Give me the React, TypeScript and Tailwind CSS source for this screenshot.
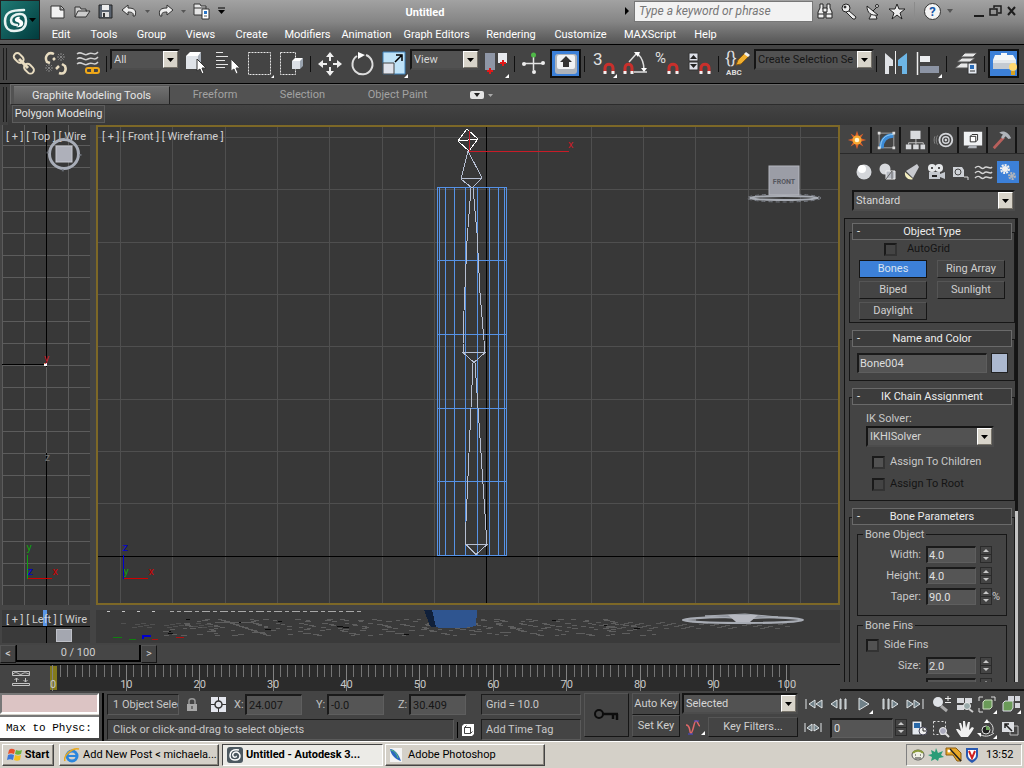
import React, { useState } from 'react';

const combo = 'appearance-none w-full h-full bg-[#525252] pl-[2px] pr-4 border-t-2 border-l-2 border-[#151515] border-b-2 border-r-2 border-b-[#4c4c4c] border-r-[#4c4c4c] outline-none';
const field = 'min-w-0 bg-[#555] border-t-2 border-l-2 border-t-[#1a1a1a] border-l-[#1a1a1a] border-b border-r border-b-[#5e5e5e] border-r-[#5e5e5e] outline-none';
const flatBtn = 'border border-t-[#555] border-l-[#555] border-b-[#161616] border-r-[#161616] text-[#cfcfcf]';
const sunken = 'border border-t-[#1c1c1c] border-l-[#1c1c1c] border-b-[#5a5a5a] border-r-[#5a5a5a]';

interface ComboProps {
  label: string;
  value: string;
  className?: string;
  dark?: boolean;
}

function Combo({ label, value, className = '', dark }: ComboProps) {
  return (
    <div className={`relative shrink-0 ${className}`}>
      <select aria-label={label} className={`${combo} ${dark ? 'text-[#161616]' : 'text-[#d6d6d6]'}`}>
        <option>{value}</option>
      </select>
      <span className="pointer-events-none absolute right-[2px] top-[2px] bottom-[2px] w-[15px] bg-[#d8d4ca] border border-t-white border-l-white border-b-[#77736a] border-r-[#77736a] flex items-center justify-center">
        <svg width="7" height="4" viewBox="0 0 7 4"><path d="M0 0h7L3.5 4z" fill="#000" /></svg>
      </span>
    </div>
  );
}

function Check({ label, disabled, className = '' }: { label: string; disabled?: boolean; className?: string }) {
  return (
    <label className={`flex items-center h-[14px] ${disabled ? 'text-[#141414]' : 'text-[#c8c8c8]'} ${className}`}>
      <input type="checkbox" disabled={disabled} className={`appearance-none w-[13px] h-[13px] border-2 border-t-[#1a1a1a] border-l-[#1a1a1a] border-b-[#333] border-r-[#333] ${disabled ? 'bg-[#444]' : 'bg-[#525252]'}`} />
      {label}
    </label>
  );
}

function Spinner({ className = '' }: { className?: string }) {
  return (
    <span className={`flex flex-col shrink-0 w-3 h-[17px] border border-[#2a2a2a] ${className}`}>
      <button aria-label="Increase" className="flex-1 flex items-center justify-center">
        <svg width="6" height="3" viewBox="0 0 6 3"><path d="M0 3h6L3 0z" fill="#c8c8c8" /></svg>
      </button>
      <button aria-label="Decrease" className="flex-1 flex items-center justify-center border-t border-[#2a2a2a]">
        <svg width="6" height="3" viewBox="0 0 6 3"><path d="M0 0h6L3 3z" fill="#c8c8c8" /></svg>
      </button>
    </span>
  );
}

/* ---------- title bar ---------- */

const quick = [
  { name: 'New', w: 'w-6', d: <path d="M2 4h10l3 3v9H2zM11 4v4h4" fill="#f2f2f2" stroke="#333" /> },
  { name: 'Open', w: 'w-6', d: <path d="M2 15V5h5l1 2h5v2h4l-4 6zM2 15l3-6h9" fill="#ccc" stroke="#333" /> },
  { name: 'Save', w: 'w-6', d: <g><path d="M2 3h13v13H2z" fill="#59626e" stroke="#222" /><path d="M5 3h7v5H5z" fill="#eee" /><path d="M5 10h7v5H5z" fill="#ddd" /><path d="M6 11h2v4H6z" fill="#333" /></g> },
  { name: 'Undo', w: 'w-6', d: <path d="M1 8l6-5v3c6 0 9 2 7 8h-2c1-3-1-4-5-4v3z" fill="#eee" stroke="#333" /> },
  { name: 'Undo list', w: 'w-3', d: <path d="M6 8h5l-2.5 3z" fill="#555" /> },
  { name: 'Redo', w: 'w-6', d: <path d="M16 8l-6-5v3c-6 0-9 2-7 8h2c-1-3 1-4 5-4v3z" fill="#eee" stroke="#333" /> },
  { name: 'Redo list', w: 'w-3', d: <path d="M6 8h5l-2.5 3z" fill="#555" /> },
  { name: 'Project folder', w: 'w-6', d: <g><path d="M1 2h6l1 2h5v9H1z" fill="#e6e6e6" stroke="#333" /><path d="M1 6h12" stroke="#333" /><path d="M9 7h7v10H9z" fill="#fff" stroke="#333" /><path d="M11 9h3v3h-3z" fill="#2a76c8" /><path d="M11 14h3" stroke="#555" /></g> },
  { name: 'Customize toolbar', w: 'w-4', d: <g><path d="M5 6h7" stroke="#000" /><path d="M5 8h7l-3.500 4z" fill="#000" /></g> },
];

const menus = [
  ['Edit', 'w-[42px]'], ['Tools', 'w-[44px]'], ['Group', 'w-[51px]'], ['Views', 'w-[47px]'],
  ['Create', 'w-[55px]'], ['Modifiers', 'w-[57px]'], ['Animation', 'w-[61px]'], ['Graph Editors', 'w-[79px]'],
  ['Rendering', 'w-[70px]'], ['Customize', 'w-[69px]'], ['MAXScript', 'w-[70px]'], ['Help', 'w-[41px]'],
];

const infoIcons = [
  { name: 'Search', d: <g fill="#eee" stroke="#222"><path d="M4 2h3v4l1 4v6H2v-6l2-4zM11 2h3v4l2 4v6h-6v-6l1-4z" /><path d="M7 6h4v4H7zM2 12h6M10 12h6" /></g> },
  { name: 'Subscription', d: <g fill="#eee" stroke="#222"><path d="M8 8l8 7-1 2h-2l-7-7z" /><circle cx="6" cy="6" r="4" /><circle cx="5" cy="5" r="1" fill="#333" /></g> },
  { name: 'Communication', d: <g fill="#eee" stroke="#222"><path d="M8 11l-3 6h8l-2-6z" /><path d="M3 4c0 7 4 10 11 9L9 9zM9 9l4-4" /><circle cx="13" cy="4" r="1.500" /></g> },
  { name: 'Favorites', d: <path d="M9 2l2 5h6l-5 4 2 6-5-4-5 4 2-6-5-4h6z" fill="#eee" stroke="#222" /> },
];

function TitleBar() {
  return (
    <header className="h-[45px] shrink-0 flex bg-linear-to-b from-[#a2a2a2] via-[#858585] to-[#545454] border-b border-black">
      <button aria-label="Application menu" className="w-10 h-10 shrink-0 bg-linear-to-br from-[#1f7a74] to-[#033c3e] border border-[#222]">
        <svg width="38" height="38" viewBox="0 0 38 38" fill="none">
          <path d="M23 9C9 9 4 12 4 20c0 7 4 10 9 10 9 0 12-4 12-10 0-5-2-7-6-7-6 0-9 3-9 6s2 5 6 5" stroke="#e9f3f2" strokeWidth="2.500" strokeLinecap="round" />
          <path d="M19 16c-5-1-7 4-3 5s3 4-1 5c6 1 8-2 7-5s-5-2-3-5z" fill="#fff" />
          <path d="M28 17h7l-3.500 4z" fill="#000" />
        </svg>
      </button>
      <div className="flex-1 min-w-0 flex flex-col">
        <div className="h-[25px] flex items-start">
          <div className="flex-1 flex items-center h-[22px] pl-[6px]">
            {quick.map(q => (
              <button key={q.name} aria-label={q.name} className={`${q.w} shrink-0 flex justify-center`}>
                <svg width="18" height="18" viewBox="0 0 18 18" className="shrink-0">{q.d}</svg>
              </button>
            ))}
            <h1 className="flex-1 pt-[3px] text-center text-white font-bold">Untitled</h1>
          </div>
          <div className="flex items-center h-[22px] pr-1">
            <svg width="14" height="10" viewBox="0 0 14 10"><path d="M5 1l4 4-4 4z" fill="#000" /></svg>
            <input aria-label="Search" placeholder="Type a keyword or phrase" className="w-[179px] h-[21px] px-1 bg-[#f2f2f2] border border-[#777] text-[12px] italic placeholder:text-[#777]" />
            {infoIcons.map(i => (
              <button key={i.name} aria-label={i.name} className="w-6 flex justify-center">
                <svg width="18" height="18" viewBox="0 0 18 18">{i.d}</svg>
              </button>
            ))}
            <span className="w-px h-[18px] mx-[5px] bg-[#8b8b8b]" />
            <button aria-label="Help" className="w-[17px] h-[17px] ml-1 rounded-full bg-[#f4f4f4] border border-[#333] text-[#1858a8] text-[13px] leading-none font-bold">?</button>
            <svg width="21" height="6" viewBox="0 0 21 6"><path d="M6 1h6l-3 4z" fill="#555" /></svg>
            <svg width="58" height="18" viewBox="0 0 58 18" fill="none" stroke="#1c1c1c" strokeWidth="2">
              <path d="M12 14h10" />
              <path d="M32 6V4h7v7h-3M28 7h7v6h-7z" strokeWidth="1.500" />
              <path d="M46 5l7 8M53 5l-7 8" />
            </svg>
          </div>
        </div>
        <nav className="flex h-[19px] items-center text-white">
          {menus.map(([m, w]) => (
            <button key={m} className={`${w} whitespace-nowrap`}>{m}</button>
          ))}
        </nav>
      </div>
    </header>
  );
}

/* ---------- main toolbar ---------- */

const magnet = <g fill="none" strokeWidth="3"><path d="M17 25v-5c0-5 8-5 8 0v5" stroke="#c8302c" /><path d="M17 23v3M25 23v3" stroke="#f0f0f0" /></g>;
const magnetLow = <g fill="none" strokeWidth="3"><path d="M5 25v-5c0-5 7-5 7 0v5" stroke="#c8302c" /><path d="M5 23v3M12 23v3" stroke="#f0f0f0" /></g>;

const tb: Record<string, React.ReactNode> = {
  'Select and Link': <g fill="none" stroke="#e8dcc0" strokeWidth="2"><rect x="5" y="6" width="11" height="7" rx="3.500" transform="rotate(45 10 10)" /><rect x="16" y="17" width="11" height="7" rx="3.500" transform="rotate(45 21 20)" /><path d="M11 11l9 9" strokeWidth="3" /></g>,
  'Unlink Selection': <g fill="none" stroke="#e8dcc0" strokeWidth="2.500"><path d="M14 6c-6-3-10 3-7 8l3 1M13 12l2-2M19 25c5 2 8-2 6-7l-3-2M16 21l3-3" /><path d="M18 6l6 6M24 6l-6 6M17 9h8M21 5v8M6 17l6 6M12 17l-6 6M5 20h8M9 16v8" stroke="#888" strokeWidth="1" strokeDasharray="2 1" /></g>,
  'Bind to Space Warp': <g fill="none"><path d="M5 6c5-4 6 3 11 0s6 3 10-2M5 11c5-4 6 3 11 0s6 3 10-2M5 16c5-4 6 3 11 0s6 3 10-2" stroke="#d0d0d0" strokeWidth="1.500" /><rect x="14" y="20" width="7" height="5" rx="2" stroke="#f0a818" strokeWidth="2" /><rect x="20" y="20" width="7" height="5" rx="2" stroke="#f0a818" strokeWidth="2" /></g>,
  'Select Object': <g><path d="M6 8l4-4h11l-2 4z" fill="#fff" /><path d="M6 8h12v13H6z" fill="#dfe3e8" /><path d="M18 8l3-4v13l-3 4z" fill="#a8b0ba" /><path d="M17 11v12l3-2 2 5 2-1-2-5h4z" fill="#fff" stroke="#333" /></g>,
  'Select by Name': <g><path d="M4 4.500h7M4 8.500h12M4 12.500h9M4 16.500h12M4 19.500h9" stroke="#e4e4e4" /><path d="M19 11v12l3-2 2 5 2-1-2-5h4z" fill="#fff" stroke="#444" /></g>,
  'Rectangular Region': <g><path d="M4.500 4.500h22v22h-22z" fill="none" stroke="#e8e8e8" strokeDasharray="2 1" /><path d="M30 27v3h-3z" fill="#fff" /></g>,
  'Window Crossing': <g><path d="M4.500 4.500h15v22h-15z" fill="none" stroke="#e8e8e8" strokeDasharray="2 1" /><path d="M16 13l3-3h8l-2 3z" fill="#fff" /><path d="M16 13h8v8h-8z" fill="#dce0e6" /><path d="M24 13l3-3v8l-3 3z" fill="#9aa4b0" /></g>,
  'Select and Move': <path d="M16 4l4 5h-3v4h-2V9h-3zM16 28l4-5h-3v-4h-2v4h-3zM4 16l5-4v3h4v2H9v3zM28 16l-5-4v3h-4v2h4v3z" fill="#f0f0f0" />,
  'Select and Rotate': <g><path d="M11 8a10 10 0 1 0 9-1" fill="none" stroke="#ddd" strokeWidth="2" /><path d="M12 4l7 3-7 4z" fill="#fff" /></g>,
  'Select and Scale': <g><path d="M5 4h22v22H5z" fill="#bfe3f8" stroke="#3c80b8" /><path d="M5 15h11v11H5z" fill="#dfe3ec" stroke="#444" /><path d="M17 14l6-6M18 7h6v6" stroke="#000" strokeWidth="1.500" fill="none" /><path d="M30 26v4h-4z" fill="#fff" /></g>,
  'Use Pivot Point Center': <g><path d="M5 5h10v17H5z" fill="#8e96a6" /><path d="M18 5h9v10h-9z" fill="#e8eaee" /><path d="M7 23h6M10 20v6M20 15h6M23 12v6" stroke="#e01818" strokeWidth="2" /><path d="M29 26v4h-4z" fill="#fff" /></g>,
  'Select and Manipulate': <g><path d="M15.500 8v14M6 15.500h19" stroke="#e4e4e4" strokeWidth="1.500" /><circle cx="15.500" cy="7" r="2.500" fill="#4fb848" /><circle cx="6" cy="16" r="2" fill="#eee" /><circle cx="25" cy="15" r="2" fill="#eee" /><circle cx="16" cy="24" r="2" fill="#eee" /></g>,
  'Keyboard Shortcut Override': <g><path d="M1 2h29v27H1z" fill="#3c80d8" stroke="#111" strokeWidth="2" /><rect x="5" y="6" width="22" height="20" rx="3" fill="#aeb3ba" /><rect x="7" y="7" width="18" height="14" rx="2" fill="#f0f2f4" /><path d="M16 8l6 6h-3v5h-6v-5h-3z" fill="#333" /></g>,
  'Snaps Toggle': <g><text x="5" y="17" fontSize="17" fill="#e0e0e0">3</text>{magnet}<path d="M29 26v4h-4z" fill="#fff" /></g>,
  'Angle Snap': <g><path d="M9 14l8-9M18 6c5 5 6 10 6 16M14 24h13" fill="none" stroke="#ddd" strokeWidth="1.500" /><path d="M14 4h6l-2 5zM21 20h6l-3 4z" fill="#fff" />{magnetLow}</g>,
  'Percent Snap': <g><text x="3" y="15" fontSize="15" fill="#e0e0e0">%</text>{magnet}</g>,
  'Spinner Snap': <g><path d="M5 5h9v8H5zM5 14h9v8H5z" fill="#dde0e8" stroke="#333" /><path d="M6 11h7l-3.500-4zM6 16h7l-3.500 4z" fill="#222" />{magnet}</g>,
  'Edit Named Selection Sets': <g><text x="3" y="16" fontSize="17" fill="#ddd">{'{}'}</text><text x="4" y="27" fontSize="8" fontWeight="bold" fill="#ddd">ABC</text><path d="M14 17l2-5 7-7 4 3-8 8z" fill="#f0b030" stroke="#8a5a10" /><path d="M22 6l2-2 4 3-2 2z" fill="#eee" /></g>,
  'Mirror': <g><path d="M5 5l8 7v6h-4v8H5z" fill="#e0e2e6" /><path d="M27 5l-9 7v6h4v8h5z" fill="#6db6e6" /><path d="M15.500 3v23" stroke="#eee" /></g>,
  'Align': <g><path d="M5.500 4v23" stroke="#eee" strokeWidth="1.500" /><path d="M8 8h10v6H8z" fill="#eceef0" /><path d="M8 18h19v7H8z" fill="#8c94a4" /><path d="M30 26v4h-4z" fill="#fff" /></g>,
  'Layer Manager': <g><path d="M5 20l6-5h14l-6 5zM7 14l5-4h13l-5 4zM11 9l4-4h12l-4 4z" fill="#e8e8e8" stroke="#555" /><path d="M18 15h9v11h-9z" fill="#e6ebf2" stroke="#333" /><path d="M20 17h4v4h-4z" fill="#2a6cb8" /><path d="M20 23h5" stroke="#333" /></g>,
  'Graphite Modeling Tools': <g><path d="M1 2h29v27H1z" fill="#3c80d8" stroke="#111" strokeWidth="2" /><path d="M5 12l2-5h6V5h6v2h6l3 5z" fill="#f4f6f8" /><path d="M5 12h23v9H5z" fill="#c4cad2" /><path d="M5 12h23v3H5z" fill="#e4e8ec" /><circle cx="25" cy="19" r="4" fill="#ffd870" /><path d="M23 23h4v4h-4z" fill="#d8a020" /></g>,
};

function Tool({ name }: { name: string }) {
  return (
    <button aria-label={name} className="w-8 h-8 shrink-0">
      <svg width="32" height="32" viewBox="0 0 32 32">{tb[name]}</svg>
    </button>
  );
}

const Sep = () => <span className="w-px h-4 ml-[2px] mr-[3px] shrink-0 bg-[#101010]" />;

const Grip = () => (
  <span className="w-1 self-stretch my-[3px] ml-[3px] mr-px shrink-0 border-x border-[#1b1b1b]" />
);

function Tools({ names }: { names: string[] }) {
  return <>{names.map(n => <Tool key={n} name={n} />)}</>;
}

function Toolbar() {
  return (
    <div className="h-[39px] shrink-0 flex items-center bg-[#444] border-b border-black">
      <Grip />
      <Tools names={['Select and Link', 'Unlink Selection', 'Bind to Space Warp']} />
      <Sep />
      <Combo label="Selection filter" value="All" className="w-[70px] h-[21px] self-start mt-1" />
      <Tools names={['Select Object', 'Select by Name', 'Rectangular Region', 'Window Crossing']} />
      <Sep />
      <Tools names={['Select and Move', 'Select and Rotate', 'Select and Scale']} />
      <Combo label="Reference coordinate system" value="View" className="w-[70px] h-[21px] self-start mt-1" />
      <Tools names={['Use Pivot Point Center']} />
      <Sep />
      <Tools names={['Select and Manipulate', 'Keyboard Shortcut Override']} />
      <Sep />
      <Tools names={['Snaps Toggle', 'Angle Snap', 'Percent Snap', 'Spinner Snap']} />
      <Sep />
      <Tools names={['Edit Named Selection Sets']} />
      <Combo label="Named selection sets" value="Create Selection Se" dark className="w-[120px] h-[21px] self-start mt-1" />
      <Sep />
      <Tools names={['Mirror', 'Align']} />
      <Sep />
      <Tools names={['Layer Manager']} />
      <Sep />
      <Tools names={['Graphite Modeling Tools']} />
    </div>
  );
}

function Ribbon() {
  const [tab, setTab] = useState('Graphite Modeling Tools');
  const tabs = [
    ['Graphite Modeling Tools', 'w-[156px]'], ['Freeform', 'w-[90px]'],
    ['Selection', 'w-[85px]'], ['Object Paint', 'w-[105px]'],
  ];
  return (
    <div className="h-[41px] shrink-0 flex bg-[#404040]">
      <Grip />
      <div className="flex-1 flex flex-col">
        <div className="h-[21px] flex items-end pl-[3px] ml-[2px] bg-[#525252] border-t border-l border-[#6a6a6a] border-b border-b-[#2c2c2c]">
          {tabs.map(([t, w]) => (
            <button
              key={t}
              onClick={() => setTab(t)}
              className={`${w} h-[18px] ${t === tab ? 'bg-linear-to-b from-[#707070] to-[#565656] text-[#e6e6e6] border-r border-t border-[#222] border-t-[#777]' : 'text-[#a2a2a2]'}`}
            >
              {t}
            </button>
          ))}
          <button aria-label="Minimize ribbon" className="ml-5 mb-[5px]">
            <svg width="24" height="8" viewBox="0 0 24 8"><rect width="14" height="8" rx="2" fill="#e4e4e4" /><path d="M4 2h6l-3 4z" fill="#222" /><path d="M18 3h5l-2.500 3z" fill="#aaa" /></svg>
          </button>
        </div>
        <div className="flex-1 flex items-start pl-1 bg-linear-to-b from-[#434343] to-[#383838]">
          <button className="h-[18px] w-[93px] bg-[#454545] border border-[#5c5c5c] text-[#e2e2e2] whitespace-nowrap">Polygon Modeling</button>
        </div>
      </div>
    </div>
  );
}

/* ---------- viewports ---------- */

const seq = (n: number) => Array.from({ length: n }, (_, i) => i);

interface TripodProps {
  x: number;
  y: number;
  up: string;
  across: string;
  depth: string;
  upColor: string;
  depthColor: string;
}

function Tripod({ x, y, up, across, depth, upColor, depthColor }: TripodProps) {
  return (
    <g fontSize="11">
      <path d={`M${x} ${y}v-24`} stroke={upColor} />
      <path d={`M${x} ${y}h24`} stroke="#d00000" />
      <text x={x - 1} y={y - 28} fill={upColor}>{up}</text>
      <text x={x} y={y - 4} fill={depthColor}>{depth}</text>
      <text x={x + 25} y={y - 4} fill="#d00000">{across}</text>
    </g>
  );
}

function TopView() {
  return (
    <section className="relative w-[88px] shrink-0 overflow-hidden bg-[#383838]">
      <svg className="absolute inset-0 w-full h-full" shapeRendering="crispEdges">
        {seq(22).map(i => <line key={i} x1="0" x2="100%" y1={20.5 + i * 22} y2={20.5 + i * 22} stroke="#5c5c5c" />)}
        {[0.5, 22.5, 66.5].map(x => <line key={x} x1={x} x2={x} y1="0" y2="100%" stroke="#5c5c5c" />)}
        <line x1="44.500" x2="44.500" y1="0" y2="100%" stroke="#000" />
        <line x1="0" x2="43" y1="239.500" y2="239.500" stroke="#000" />
        <line x1="44.500" x2="44.500" y1="242" y2="328" stroke="#5c5c5c" />
        <rect x="42" y="238" width="3" height="3" fill="#fff" />
        <text x="42" y="237" fontSize="11" fill="#c81c28">y</text>
        <text x="43" y="336" fontSize="10" fill="#777">z</text>
        <Tripod x={25.5} y={453.5} up="y" upColor="#10a010" across="x" depth="z" depthColor="#0000d0" />
      </svg>
      <span className="absolute left-1 top-1 whitespace-nowrap text-[#cfcfcf]">[ + ] [ Top ] [ Wire</span>
      <svg width="36" height="36" viewBox="0 0 36 36" className="absolute left-[44px] top-[11px]">
        <circle cx="18" cy="18" r="14.500" fill="none" stroke="#a8adb8" strokeWidth="3" />
        <circle cx="18" cy="18" r="16.500" fill="none" stroke="#6a6e76" strokeDasharray="2 24" strokeWidth="2" />
        <rect x="10" y="10" width="16" height="16" fill="#aeb0ba" stroke="#c6c8d0" />
      </svg>
    </section>
  );
}

const sides = [339.5, 341.5, 347.5, 356.5, 367.5, 379.5, 391.5, 400.5, 406.5, 408.5];
const rings = [60.5, 133.5, 207.5, 281.5, 354.5, 428.5];

function FrontView() {
  return (
    <section className="relative flex-1 min-w-0 overflow-hidden bg-[#383838] border-2 border-[#7d6827]">
      <svg className="absolute inset-0 w-full h-full" shapeRendering="crispEdges" fill="none">
        <g stroke="#4f4f4f">
          {seq(24).map(i => {
            const x = Math.round(22 + i * 52.3) + 0.5;
            return <line key={i} x1={x} x2={x} y1="0" y2="100%" />;
          })}
          {seq(8).map(i => {
            const y = Math.round(10 + i * 52.3) + 0.5;
            return <line key={i} x1="0" x2="100%" y1={y} y2={y} />;
          })}
        </g>
        <path d="M388.500 0v600" stroke="#000" />
        <line x1="0" x2="100%" y1="429.500" y2="429.500" stroke="#000" />
        <g stroke="#5692e6">
          {sides.map(x => <line key={x} x1={x} x2={x} y1="60" y2="429" />)}
          {rings.map(y => <line key={y} x1="339" x2="409" y1={y} y2={y} />)}
        </g>
        <g stroke="#b6bfd2">
          <path d="M370 24l-7 28 11 9 10-10zM363 52l21-1" />
          <path d="M373 61l-4 53-3 70-1 33v9M375 61l4 45 3 60 5 59M365 225.500h22l-11 10z" />
          <path d="M375 236l-4 90-4 92M377 236l6 90 6 92M368 417.500h21l-11 10z" />
        </g>
        <path d="M369 2l11 10-9 12-11-10zM360 14l20-2" stroke="#fff" />
        <path d="M371.500 4v20.500H471" stroke="#c81c28" />
        <text x="470" y="21" fontSize="11" fill="#c81c28">x</text>
        <Tripod x={25.5} y={451.5} up="z" upColor="#0000d0" across="x" depth="y" depthColor="#10a010" />
      </svg>
      <span className="absolute left-1 top-[2px] text-[#cfcfcf]">[ + ] [ Front ] [ Wireframe ]</span>
      <svg width="76" height="40" viewBox="0 0 76 40" className="absolute right-[16px] top-[38px]">
        <ellipse cx="38" cy="33" rx="34" ry="2" fill="none" stroke="#a8acb4" strokeWidth="2" />
        <ellipse cx="38" cy="33" rx="37" ry="4" fill="none" stroke="#787c84" strokeDasharray="4 3" />
        <rect x="23" y="1" width="30" height="29" fill="#9b9da6" stroke="#b4b6be" />
        <text x="38" y="19" textAnchor="middle" fontSize="7" fontWeight="bold" fill="#55575e">FRONT</text>
      </svg>
    </section>
  );
}

function LeftView() {
  return (
    <section className="relative w-[88px] shrink-0 overflow-hidden bg-[#3a3a3a]">
      <svg className="absolute inset-0 w-full h-full" shapeRendering="crispEdges">
        <path d="M44.500 0v33M0 16.500h88" stroke="#000" />
        <rect x="41" y="0" width="4" height="16" fill="#5a96e8" />
        <rect x="54" y="19" width="15" height="12" fill="#a4a7b0" stroke="#bfc1c8" />
      </svg>
      <span className="absolute left-1 top-[2px] whitespace-nowrap text-[#cfcfcf]">[ + ] [ Left ] [ Wire</span>
    </section>
  );
}

function PerspectiveView() {
  return (
    <section className="relative flex-1 min-w-0 overflow-hidden bg-[#3a3a3a]">
      <svg className="absolute inset-0 w-full h-full" shapeRendering="crispEdges">
        {seq(4).map(i => <rect key={i} x={11 + i * 15} y="1" width="3" height="1" fill="#c4c4c4" />)}
        {seq(32).map(i => (
          <rect key={i} x={74 + i * 6 + (i % 3)} y="1" width="4" height="1" fill="#a8a8a8" />
        ))}
        {seq(300).map(i => {
          const row = i % 17;
          const x = 90 - row * 2 + ((i * 131 + row * 29) % (430 + row * 5));
          return <rect key={i} x={x} y={9 + row} width={4 + (i % 3)} height="1" fill={i % 23 === 0 ? '#0c0c0c' : '#5e5e5e'} />;
        })}
        {seq(60).map(i => (
          <rect key={i} x={500 + ((i * 43) % 190)} y={12 + (i % 7)} width="5" height="1" fill="#585858" />
        ))}
        {seq(20).map(i => (
          <rect key={i} x={25 + ((i * 29) % 90)} y={13 + (i % 5)} width="5" height="1" fill="#505050" />
        ))}
        <path d="M328 0h53l-1 16c-12 3-36 3-46 0z" fill="#2f5590" />
        <path d="M328 0h8l4 17c-3 0-5 0-6-1z" fill="#10203a" />
        <path d="M17 27h9M33 29h7" stroke="#108010" />
        <path d="M47 29v-3h8" stroke="#0000d0" strokeWidth="2" fill="none" />
        <path d="M56 29h6M80 27h8" stroke="#b01010" />
      </svg>
      <svg width="126" height="14" viewBox="0 0 126 14" className="absolute right-[34px] top-[3px]">
        <ellipse cx="63" cy="7" rx="60" ry="3" fill="none" stroke="#a8acb4" strokeWidth="2" />
        <path d="M25 3l40-2 33 3-33 2zM2 7h14" fill="#8f939b" stroke="#a8acb4" />
        <path d="M48 2h30l-8 7H56z" fill="#b6b8c0" />
      </svg>
    </section>
  );
}

function TimeSlider() {
  return (
    <div className="h-[21px] shrink-0 flex items-center text-[#cfcfcf]">
      <button aria-label="Previous frame" className={`${flatBtn} w-4 h-[18px]`}>&lt;</button>
      <button className="w-[125px] h-[17px] border-b-2 border-r-2 border-l border-black bg-[#464646]">0 / 100</button>
      <button aria-label="Next frame" className={`${flatBtn} w-4 h-[18px]`}>&gt;</button>
    </div>
  );
}

function TrackBar() {
  const pos = (f: number) => `${(0.4 + f * 0.9918).toFixed(2)}%`;
  return (
    <div className="h-[27px] shrink-0 flex border-t border-black">
      <button aria-label="Open mini curve editor" className="w-[50px] shrink-0 flex items-center justify-center pr-2">
        <svg width="18" height="18" viewBox="0 0 18 18" fill="none" stroke="#c4c4c4">
          <path d="M.5 2.500h17v4H.5zM1 5c4-4 6 2 9 0s4-1 7 0M.5 14.500h17v2H.5zM4.500 13V9M2.500 11l2-2 2 2M13.500 9v4M11.500 11l2 2 2-2" />
        </svg>
      </button>
      <svg className="flex-1 min-w-0 h-[26px] bg-[#2b2b2b] overflow-visible" shapeRendering="crispEdges">
        <rect x="0" y="1" width="7" height="24" fill="#847a1c" />
        {seq(101).map(i => (
          <line key={i} x1={pos(i)} x2={pos(i)} y1="0" y2={i % 10 ? 12 : 26} stroke={i % 10 ? '#747474' : '#828282'} />
        ))}
        {seq(11).map(i => (
          <text key={i} x={pos(i * 10)} y="23" textAnchor="middle" fontSize="11" fill="#c8c8c8">{i * 10}</text>
        ))}
      </svg>
      <span className="w-[50px] shrink-0" />
    </div>
  );
}

/* ---------- command panel ---------- */

const panelTabs = [
  { name: 'Create', d: <g><path d="M12 2l2 6 5-3-3 5 6 2-6 2 3 5-5-3-2 6-2-6-5 3 3-5-6-2 6-2-3-5 5 3z" fill="#d8602c" /><circle cx="12" cy="12" r="5" fill="#f8a830" /><circle cx="12" cy="12" r="2.500" fill="#fff8d0" /></g> },
  { name: 'Modify', d: <g fill="none"><path d="M4.500 4.500h16v16h-16z" stroke="#aaa" /><path d="M7 21C7 12 12 7 20 7" stroke="#3c8cd8" strokeWidth="5" /><path d="M6 21C6 11 11 6 20 6" stroke="#9ad0f4" /><path d="M3 3h3v3H3zM19 3h3v3h-3zM3 19h3v3H3zM19 19h3v3h-3z" fill="#ddd" /></g> },
  { name: 'Hierarchy', d: <g fill="#d8dadd"><path d="M7 2h11v9H7zM2 17h6v5H2zM10 17h6v5h-6zM18 17h5v5h-5z" /><path d="M13 11v6M5 17v-2h16v2" stroke="#ccc" fill="none" /></g> },
  { name: 'Motion', d: <g fill="none" stroke="#d4d6da"><circle cx="14" cy="12" r="7" strokeWidth="2" /><circle cx="14" cy="12" r="3.500" strokeWidth="1.500" /><circle cx="14" cy="12" r="1" fill="#fff" /><path d="M5 7c-2 3-2 7 0 10M2 8c-1 3-1 5 0 8" stroke="#888" /></g> },
  { name: 'Display', d: <g><path d="M2 3h20v15H2z" fill="#f0f2f4" /><path d="M8 18h8v3H6z" fill="#b0b4ba" /><path d="M9 8h6v6H9zM9 8l2-2h6v6l-2 2" fill="#fff" stroke="#222" /></g> },
  { name: 'Utilities', d: <g><path d="M3 21l11-12" stroke="#b8605c" strokeWidth="3" /><path d="M9 4c5-3 10 0 13 6l-3 1-3-3-3 3-2-2 2-3z" fill="#b0b4ba" /></g> },
];

const categories = [
  { name: 'Geometry', d: <g><circle cx="12" cy="12" r="7.500" fill="#d4d6da" /><circle cx="10" cy="9" r="4" fill="#fff" /></g> },
  { name: 'Shapes', d: <g><circle cx="9" cy="9" r="5.500" fill="#d8dade" /><path d="M10 11h9v8h-9z" fill="#b8bcc4" stroke="#f0f0f0" /><path d="M10 19l6-8v8" fill="none" stroke="#666" /></g> },
  { name: 'Lights', d: <g><path d="M5 12l8 7c-4 2-9-2-8-7z" fill="#f6f0c0" /><path d="M6 11l11-7 2 3-6 11z" fill="#c8cacf" /></g> },
  { name: 'Cameras', d: <g><circle cx="8" cy="8" r="4" fill="#e6e8ea" /><circle cx="15" cy="8" r="4" fill="#e6e8ea" /><path d="M5 12h11v7H5zM16 14l5-2v7l-5-2z" fill="#c4c8ce" /><circle cx="8" cy="8" r="1" fill="#222" /><circle cx="15" cy="8" r="1" fill="#222" /><path d="M8 16h5" stroke="#222" strokeWidth="2" /></g> },
  { name: 'Helpers', d: <g><path d="M5 7h9l2 3v7H5z" fill="#d0d3d8" /><circle cx="10" cy="12" r="3" fill="none" stroke="#444" /><path d="M16 17h4v3" stroke="#ddd" fill="none" /></g> },
  { name: 'Space Warps', d: <path d="M3 8c5-5 6 3 9 0s6 2 8-1M3 13c5-5 6 3 9 0s6 2 8-1M3 18c5-5 6 3 9 0s6 2 8-1" fill="none" stroke="#d4d4d4" strokeWidth="1.500" /> },
  { name: 'Systems', d: <g><path d="M1 1h22v22H1z" fill="#3c80d8" /><circle cx="9" cy="9" r="3" fill="#f0f0f0" /><circle cx="9" cy="9" r="4" fill="none" stroke="#f0f0f0" strokeWidth="2" strokeDasharray="2 1" /><circle cx="16" cy="16" r="2" fill="#b0b4ba" /><circle cx="16" cy="16" r="3" fill="none" stroke="#b0b4ba" strokeWidth="2" strokeDasharray="2 1" /></g> },
];

function Rollout({ title, children, className = '' }: { title: string; children: React.ReactNode; className?: string }) {
  return (
    <section className="mb-[7px] shrink-0">
      <button className="relative z-10 block w-[calc(100%-6px)] mx-[3px] h-[17px] leading-[15px] bg-[#3c3c3c] border border-[#6a6a6a] text-[#ececec]">
        <span className="absolute left-1">-</span>
        {title}
      </button>
      <div className={`-mt-2 border border-[#171717] pt-2 ${className}`}>{children}</div>
    </section>
  );
}

function Param({ label, value, unit }: { label: string; value: string; unit?: string }) {
  return (
    <div className="flex items-center h-[21px]">
      <label htmlFor={label} className="flex-1 min-w-0 text-right pr-[5px] whitespace-nowrap text-[#c8c8c8]">{label}:</label>
      <input id={label} defaultValue={value} className={`${field} w-[50px] h-[17px] px-px text-[#e0e0e0]`} />
      <Spinner className="ml-1" />
      <span className="w-[10px] text-[#c8c8c8]">{unit}</span>
    </div>
  );
}

function CommandPanel() {
  return (
    <aside className="w-[184px] shrink-0 flex flex-col overflow-hidden pb-[7px] border-b-2 border-[#101010]">
      <div className="h-[27px] mt-[2px] pl-[3px] flex shrink-0 border-b border-[#2a2a2a]">
        {panelTabs.map(t => (
          <button key={t.name} aria-label={t.name} className="w-[29px] flex items-center justify-center border-r-2 border-[#141414]">
            <svg width="22" height="22" viewBox="0 0 24 24">{t.d}</svg>
          </button>
        ))}
      </div>
      <div className="h-[26px] mt-[5px] pl-3 flex items-center shrink-0">
        {categories.map(c => (
          <button key={c.name} aria-label={c.name} className="w-6 shrink-0">
            <svg width="24" height="24" viewBox="0 0 24 24">{c.d}</svg>
          </button>
        ))}
      </div>
      <Combo label="Category" value="Standard" className="ml-3 mr-[9px] mt-[5px] h-[21px]" />
      <div className="flex-1 min-h-0 mt-[7px] ml-1 mr-[6px] flex border-t border-l border-[#141414]">
        <div className="flex-1 min-w-0 overflow-hidden flex flex-col pt-1 pl-1">
          <Rollout title="Object Type">
            <Check label="AutoGrid" disabled className="ml-[34px] mt-px gap-[10px]" />
            <div className="grid grid-cols-2 gap-x-[10px] gap-y-[3px] mt-1 px-[9px] pb-[2px]">
              <button className="h-[18px] bg-[#3c80d8] border border-[#151515] text-[#d8e2f0]">Bones</button>
              {['Ring Array', 'Biped', 'Sunlight', 'Daylight'].map(b => (
                <button key={b} className={`${flatBtn} h-[18px] leading-4 whitespace-nowrap`}>{b}</button>
              ))}
            </div>
          </Rollout>
          <Rollout title="Name and Color">
            <div className="flex gap-1 pl-[7px] pr-[6px] pt-[5px] pb-[7px]">
              <input aria-label="Object name" defaultValue="Bone004" className={`${field} flex-1 h-5 px-px text-[#dedede]`} />
              <button aria-label="Object color" className="w-[17px] h-5 bg-[#acb9d0] border border-[#222]" />
            </div>
          </Rollout>
          <Rollout title="IK Chain Assignment">
            <div className="pl-4 pr-5 pt-[5px] pb-[9px] text-[#c8c8c8]">
              <div className="h-[15px]">IK Solver:</div>
              <Combo label="IK Solver" value="IKHISolver" className="w-full h-[21px]" />
              <Check label="Assign To Children" className="ml-[6px] mt-2 gap-[5px] whitespace-nowrap" />
              <Check label="Assign To Root" disabled className="ml-[6px] mt-2 gap-[5px]" />
            </div>
          </Rollout>
          <Rollout title="Bone Parameters" className="px-[7px]">
            <fieldset className="h-[89px] min-w-0 border border-[#171717] pt-[2px] px-1 mt-px">
              <legend className="ml-px px-[2px] text-[#c8c8c8] leading-[15px]">Bone Object</legend>
              <Param label="Width" value="4.0" />
              <Param label="Height" value="4.0" />
              <Param label="Taper" value="90.0" unit="%" />
            </fieldset>
            <fieldset className="h-[110px] min-w-0 border border-[#171717] px-1 mt-[2px]">
              <legend className="ml-px px-[2px] text-[#c8c8c8] leading-[15px]">Bone Fins</legend>
              <Check label="Side Fins" className="ml-1 mt-[5px] mb-[3px] gap-[5px]" />
              <Param label="Size" value="2.0" />
              <Param label="Start Taper" value="10.0" />
            </fieldset>
          </Rollout>
        </div>
        <div className="w-[3px] flex flex-col">
          <div className="grow-[294] bg-[#141414]" />
          <div className="grow-[172] bg-[#c4c4c4]" />
        </div>
      </div>
    </aside>
  );
}

/* ---------- status bar ---------- */

const play = [
  { name: 'Go to start', d: <path d="M4 6v10M13 7l-6 4 6 4zM20 7l-6 4 6 4z" /> },
  { name: 'Previous', d: <path d="M9 7l-6 4 6 4zM12 6h1v10h-1zM17 6h1v10h-1z" /> },
  { name: 'Play', d: <g><path d="M6 5l10 6-10 6z" /><path d="M20 17v4h-4z" stroke="none" fill="#fff" /></g> },
  { name: 'Next', d: <path d="M13 7l6 4-6 4zM4 6h1v10H4zM9 6h1v10H9z" /> },
  { name: 'Go to end', d: <path d="M19 6v10M3 7l6 4-6 4zM10 7l6 4-6 4z" /> },
];

const nav = [
  { name: 'Zoom', d: <g><circle cx="8" cy="9" r="5" fill="#dfe2e6" /><path d="M11 13l6 5" stroke="#aaa" strokeWidth="3" /><path d="M15 5.500h6M18 3v5M15 9.500h6" stroke="#eee" /></g> },
  { name: 'Zoom All', d: <g><path d="M4 5h7v5H4zM12 5h7v5h-7zM4 12h7v5H4z" fill="#d8dade" /><circle cx="14" cy="13" r="3.500" fill="#99aaaa" stroke="#eee" /><path d="M16 16l4 3" stroke="#ccc" strokeWidth="2" /></g> },
  { name: 'Zoom Extents', d: <g><path d="M3 8V4h4M15 4h4v4M3 15v4h4" stroke="#ddd" fill="none" /><path d="M7 9l2-2h7v7l-2 2H7z" fill="#6a9a58" stroke="#cfe0c4" /><path d="M21 17v4h-4z" fill="#fff" /></g> },
  { name: 'Zoom Extents All', d: <g><path d="M9 3h6v5H9zM16 3h5v5h-5zM16 10h5v5h-5z" fill="#d4d6dc" /><path d="M4 10l2-2h8v7l-2 3H4z" fill="#6a9a58" stroke="#dddde8" /><path d="M22 17v4h-4z" fill="#fff" /></g> },
  { name: 'Zoom Region', d: <g><path d="M3.500 3.500h12v13h-12z" stroke="#ddd" fill="none" strokeDasharray="2 2" /><circle cx="13" cy="13" r="3.500" fill="#aaaabb" stroke="#eee" /><path d="M15 15l4 4" stroke="#ddd" strokeWidth="2" /></g> },
  { name: 'Pan View', d: <path d="M8 19c-2-3-4-5-5-8h2l3 2-2-8h2l2 6V3h2l1 7 2-6h2l-1 8 3-3 2 1c-2 4-4 6-6 9z" fill="#f0f0f0" /> },
  { name: 'Orbit', d: <g><path d="M10 3a8 8 0 0 1 6 12M3 16c5 3 10 3 15-1" fill="none" stroke="#ddd" /><circle cx="10" cy="12" r="4" fill="#222" stroke="#ddd" /><path d="M10 12V8a4 4 0 0 1 4 4z" fill="#6aa058" /><path d="M8 5l3-4 2 4zM1 15h4v4zM21 17v4h-4z" fill="#fff" /></g> },
  { name: 'Maximize Viewport', d: <g><path d="M3 4h12v10H3z" fill="#dcdee2" /><path d="M6 6l7 7M6 10V6h4" stroke="#222" strokeWidth="1.500" fill="none" /><path d="M15 8h4v9h-8v-3" fill="none" stroke="#bbb" /></g> },
];

function Coord({ axis, value, className }: { axis: string; value: string; className: string }) {
  return (
    <label className={`flex items-center text-[#c0c0c0] ${className}`}>
      <span className="w-[11px]">{axis}:</span>
      <input defaultValue={value} className={`${field} w-[57px] h-[21px] px-[2px] text-[#161616]`} />
    </label>
  );
}

function StatusBar() {
  return (
    <div className="h-[50px] shrink-0 flex bg-[#444] pt-[2px]">
      <div className="w-[99px] shrink-0 flex flex-col gap-px mb-[3px] bg-[#d4d0c8] font-['Liberation_Mono',monospace]">
        <input aria-label="Macro recorder" className="w-full h-[21px] bg-[#dcc4c4] border-2 border-t-[#777] border-l-[#777] border-b-white border-r-white" />
        <input aria-label="Script listener" defaultValue="Max to Physc:" className="w-full flex-1 min-h-0 bg-white border-t-2 border-[#777] pl-[6px] text-black text-[11px]" />
      </div>
      <span className="w-[2px] mx-[3px] bg-black shrink-0" />
      <div className="w-[368px] shrink-0 flex flex-col gap-[4px] pt-px">
        <div className="flex items-center text-[#c8c8c8]">
          <div className={`${sunken} w-[72px] h-[21px] pl-[5px] leading-[19px] overflow-hidden whitespace-nowrap`}>1 Object Selec</div>
          <button aria-label="Selection lock" className="ml-[7px]"><svg width="12" height="16" viewBox="0 0 12 16"><path d="M3 7V4c0-3 6-3 6 0v3" fill="none" stroke="#999" strokeWidth="1.500" /><path d="M1 7h10v7H1z" fill="#a8a8a8" /><path d="M6 9v3" stroke="#333" /></svg></button>
          <button aria-label="Absolute mode" className="ml-[13px]"><svg width="15" height="15" viewBox="0 0 15 15"><path d="M0 0h15v15H0z" fill="#e4e6ee" /><circle cx="7.500" cy="7.500" r="3.500" fill="none" stroke="#333" strokeWidth="1.500" /><path d="M7.500 0v4M7.500 11v4M0 7.500h4M11 7.500h4" stroke="#333" /></svg></button>
          <Coord axis="X" value="24.007" className="ml-2" />
          <Coord axis="Y" value="-0.0" className="ml-[14px]" />
          <Coord axis="Z" value="30.409" className="ml-[14px]" />
        </div>
        <div className="flex items-center">
          <div className={`${sunken} flex-1 h-[21px] pl-[5px] leading-[19px] text-[#c8c8c8]`}>Click or click-and-drag to select objects</div>
          <span className="w-px h-4 mx-[3px] bg-black" />
          <svg width="14" height="14" viewBox="0 0 14 14"><path d="M1 3l2-2h10v10l-2 2H1z" fill="#fff" /><path d="M3.500 4.500h6v6h-6zM3.500 4.500l2-2M9.500 10.500l2-2" fill="none" stroke="#444" /></svg>
        </div>
      </div>
      <div className="w-[100px] ml-[6px] shrink-0 flex flex-col gap-[4px] pt-px text-[#c8c8c8]">
        <div className={`${sunken} h-[21px] pl-1 leading-[19px]`}>Grid = 10.0</div>
        <button className={`${sunken} h-[21px] pl-1 text-left`}>Add Time Tag</button>
      </div>
      <button aria-label="Set keys" className={`${flatBtn} w-[45px] h-11 ml-[3px] shrink-0 flex items-center justify-center`}>
        <svg width="26" height="14" viewBox="0 0 26 14" fill="none" stroke="#0c0c0c"><circle cx="5" cy="6" r="4" strokeWidth="2" /><path d="M9 6h15M19 6v5M23 6v6" strokeWidth="2.500" /></svg>
      </button>
      <div className="w-[48px] ml-[3px] shrink-0 flex flex-col whitespace-nowrap">
        <button className={`${flatBtn} h-[22px]`}>Auto Key</button>
        <button className={`${flatBtn} h-[22px]`}>Set Key</button>
      </div>
      <div className="w-[116px] ml-[2px] shrink-0 flex flex-col gap-[3px]">
        <Combo label="Key selection" value="Selected" className="w-full h-[21px]" />
        <div className="flex items-center">
          <button aria-label="Default tangents" className="w-[26px]">
            <svg width="24" height="20" viewBox="0 0 24 20"><path d="M4 8c5 0 3 8 5 8s3-12 5-12 2 5 4 5" fill="none" stroke="#e06868" strokeWidth="1.500" /><path d="M6 17h5M12 4h5" stroke="#4848d8" /><path d="M23 14v4h-4z" fill="#fff" /></svg>
          </button>
          <button className={`${flatBtn} flex-1 h-5`}>Key Filters...</button>
        </div>
      </div>
      <div className="w-[128px] ml-1 shrink-0 flex flex-col gap-px">
        <div className="flex justify-between pr-[3px]">
          {play.map(p => (
            <button key={p.name} aria-label={p.name} className="w-[23px]">
              <svg width="22" height="22" viewBox="0 0 22 22" fill="#6f8088" stroke="#e0e4e6">{p.d}</svg>
            </button>
          ))}
        </div>
        <div className="flex items-center h-[23px]">
          <button aria-label="Key mode" className="w-7">
            <svg width="22" height="20" viewBox="0 0 22 20" fill="#6f8088" stroke="#e0e4e6"><path d="M3 5v9M19 5v9M10 6l-5 4 5 3zM12 6l5 4-5 3z" /></svg>
          </button>
          <input aria-label="Current frame" defaultValue="0" className={`${field} w-[63px] h-5 px-[2px] text-[#dedede]`} />
          <Spinner className="ml-[2px]" />
          <button aria-label="Time configuration" className="ml-1">
            <svg width="18" height="18" viewBox="0 0 18 18"><path d="M1 2h10v14H1z" fill="#e4e8ee" stroke="#333" /><path d="M3 4h6v5H3z" fill="#2868a8" /><circle cx="12" cy="12" r="4" fill="#f0f0f0" stroke="#444455" /><path d="M12 9v3h3" stroke="#222" fill="none" /></svg>
          </button>
        </div>
      </div>
      <div className="ml-auto mr-[2px] shrink-0 grid grid-cols-4 gap-y-px">
        {nav.map(n => (
          <button key={n.name} aria-label={n.name} className="w-[23px] h-[22px]">
            <svg width="23" height="22" viewBox="0 0 23 22">{n.d}</svg>
          </button>
        ))}
      </div>
    </div>
  );
}

/* ---------- taskbar ---------- */

const raised = 'border border-t-white border-l-white border-b-[#444] border-r-[#444] shadow-[inset_-1px_-1px_#8a867e]';

function Taskbar() {
  return (
    <footer className="h-[27px] shrink-0 flex items-center bg-[#d4d0c8] border-t border-white px-[2px] text-black">
      <button className={`${raised} w-[52px] h-[22px] flex items-center justify-center gap-[2px] font-bold`}>
        <svg width="16" height="16" viewBox="0 0 16 16"><path d="M2 3c2-2 4-1 6 0L7 7C5 6 3 6 1 7z" fill="#e8502c" /><path d="M9 3c2 1 4 1 6 0l-1 4c-2 1-4 1-6 0z" fill="#6cb33c" /><path d="M1 8c2-1 4-1 6 0l-1 5c-2-1-4-1-6 0z" fill="#3c78d8" /><path d="M8 8c2 1 4 1 6 0l-1 5c-2 1-4 1-6 0z" fill="#f4c020" /></svg>
        Start
      </button>
      <button className={`${raised} w-[160px] h-[22px] ml-[5px] flex items-center gap-[3px] pl-1 whitespace-nowrap overflow-hidden`}>
        <svg width="16" height="16" viewBox="0 0 16 16" fill="none" className="shrink-0"><circle cx="8" cy="9" r="5" stroke="#2c86dc" strokeWidth="3" /><path d="M4 9h9" stroke="#2c86dc" strokeWidth="2" /><path d="M1 14C-1 9 8 0 15 2" stroke="#e8a820" strokeWidth="1.500" /></svg>
        Add New Post &lt; michaela...
      </button>
      <button className="w-[161px] h-[22px] ml-[3px] flex items-center gap-[3px] pl-1 bg-[#ecebe7] border border-t-[#444] border-l-[#444] border-b-white border-r-white font-bold whitespace-nowrap overflow-hidden">
        <svg width="16" height="16" viewBox="0 0 16 16" fill="none" className="shrink-0"><rect width="16" height="16" rx="3" fill="#4c5860" /><path d="M12 3C6 2 3 4 3 9c0 3 3 4 5 4 4 0 5-2 5-4s-2-4-4-4-4 2-3 4 4 1 3 0" stroke="#fff" strokeWidth="1.500" /></svg>
        Untitled - Autodesk 3...
      </button>
      <button className={`${raised} w-[160px] h-[22px] ml-[2px] flex items-center gap-[5px] pl-[3px] whitespace-nowrap`}>
        <svg width="14" height="16" viewBox="0 0 14 16"><path d="M1 1h12v14H1z" fill="#f4f4f4" /><path d="M1 2c5 0 9 6 11 12-6-2-10-6-11-12z" fill="#2c68c0" /><path d="M2 3c4 1 6 4 7 8" stroke="#58c070" fill="none" /></svg>
        Adobe Photoshop
      </button>
      <div className="ml-auto h-[22px] w-[116px] flex items-center gap-[2px] pl-[3px] border border-t-[#808080] border-l-[#808080] border-b-white border-r-white">
        <svg width="70" height="18" viewBox="0 0 70 18">
          <ellipse cx="8" cy="9" rx="6" ry="5" fill="#f0f0e4" stroke="#555" /><path d="M3 7c2-3 8-3 10 0" stroke="#8a9a3c" strokeWidth="2" fill="none" /><path d="M5 9h1M10 9h1M5 12h6" stroke="#333" />
          <path d="M26 2l2 5 5-2-2 4 3 2-5 1-1 3-3-2-4 2 1-4-4-2 4-1-1-4 4 2z" fill="#2a9c78" />
          <path d="M36 2h10l5 5v8h-4l-4-6h-7z" fill="#e8a828" stroke="#8a5a10" /><path d="M40 3l11 12" stroke="#222" strokeWidth="1.500" /><circle cx="39" cy="5" r="1.500" fill="#fff" />
          <path d="M56 2h12v7c0 4-3 6-6 8-3-2-6-4-6-8z" fill="#2858b0" /><path d="M58 4h8v5c0 3-2 4-4 5-2-1-4-2-4-5z" fill="#fff" /><path d="M59 5l3 7 3-7" stroke="#d02020" strokeWidth="2" fill="none" />
        </svg>
        <time className="ml-1">13:52</time>
      </div>
    </footer>
  );
}

export default function App() {
  return (
    <div className="h-screen flex flex-col overflow-hidden bg-[#444] font-[Roboto,'Liberation_Sans',sans-serif] text-[11px] leading-4">
      <TitleBar />
      <Toolbar />
      <Ribbon />
      <div className="flex-1 min-h-0 flex">
        <main className="flex-1 min-w-0 flex flex-col">
          <div className="flex-1 min-h-0 flex gap-[6px] pl-[2px]">
            <TopView />
            <FrontView />
          </div>
          <div className="h-[33px] mt-[5px] shrink-0 flex gap-[6px] pl-[2px]">
            <LeftView />
            <PerspectiveView />
          </div>
          <TimeSlider />
          <TrackBar />
        </main>
        <CommandPanel />
      </div>
      <StatusBar />
      <Taskbar />
    </div>
  );
}
